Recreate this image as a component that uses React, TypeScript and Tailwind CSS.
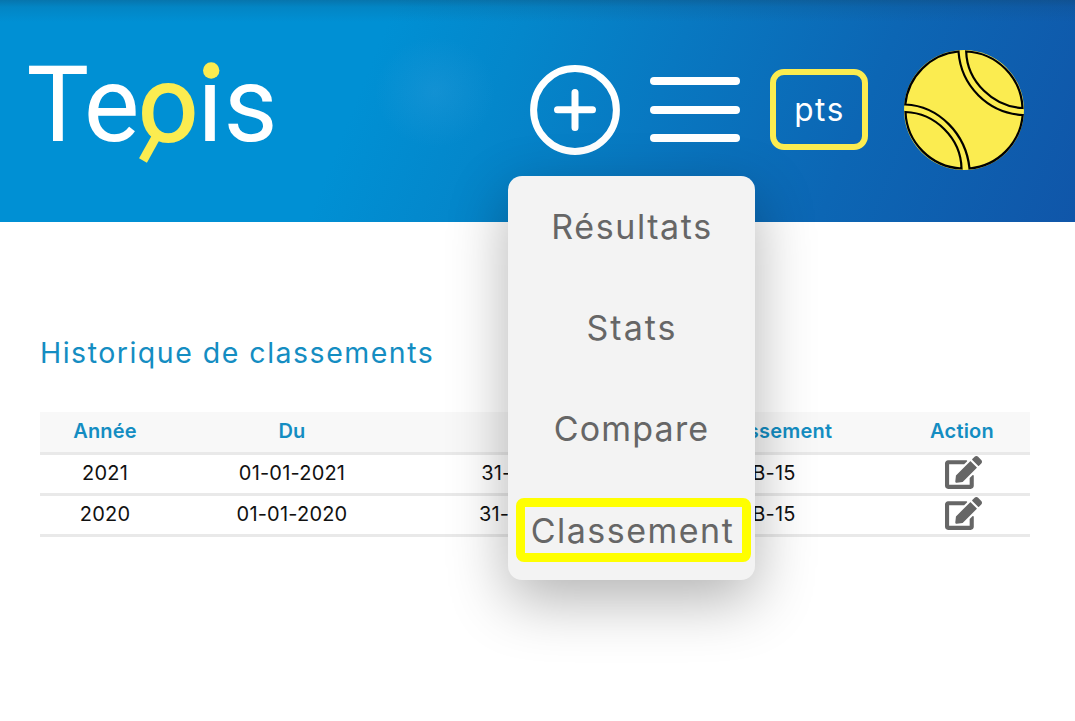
import { FaEdit } from "react-icons/fa";

const rows = [
  { year: "2021", from: "01-01-2021", to: "31-12-2021", rank: "B-15" },
  { year: "2020", from: "01-01-2020", to: "31-12-2020", rank: "B-15" },
];

function Logo() {
  return (
    <svg width="250" height="140" viewBox="28 38 250 140" className="block overflow-visible" fontFamily="Roboto, sans-serif" fontSize="105" fill="#fff">
      <text x="26.5" y="140.8">T</text>
      <text x="83.7" y="140.8">e</text>
      <text x="138.3" y="141.3" fill="#fbec50" stroke="#fbec50" strokeWidth="1.8">o</text>
      <path d="M154.5 137 L143 160.5" transform="rotate(3 143 160)" stroke="#fbec50" strokeWidth="9" />
      <text x="197.2" y="140.8">i</text>
      <circle cx="211.2" cy="70.5" r="8.2" fill="#fbec50" />
      <text x="223.5" y="140.8">s</text>
    </svg>
  );
}

function Ball() {
  return (
    <svg width="120" height="120" viewBox="0 0 120 120" className="block">
      <circle cx="60" cy="60" r="60" fill="#fbec50" />
      <g fill="none" stroke="#000" strokeWidth="2.2">
        <path d="M1.3 54.5 A59 59 0 0 1 54.5 1.5 C57 36 84 63 118.7 65 A59 59 0 0 1 65.5 118.5 C62 84 35 56 1.3 54.5Z" />
        <path d="M62.2 1.5 A59 59 0 0 1 118.5 58 C90 57 63 32 62.2 1.5Z" />
        <path d="M1.5 62 C31 63 57 88 57.5 118.5 A59 59 0 0 1 1.5 62Z" />
      </g>
    </svg>
  );
}

function Header() {
  return (
    <header className="flex h-[222px] items-start bg-[linear-gradient(180deg,rgba(20,60,90,0.32)_0px,rgba(20,60,90,0.13)_7px,rgba(20,60,90,0)_22px),radial-gradient(ellipse_60px_55px_at_435px_92px,rgba(60,160,220,0.28),rgba(60,160,220,0)),linear-gradient(112deg,#0090d4_0%,#0090d4_34%,#0487cb_46%,#0878c1_60%,#0c66b4_78%,#1056a9_100%)] pl-7">
      <div className="mt-[38px] w-[502px]"><Logo /></div>
      <svg width="90" height="90" viewBox="0 0 90 90" className="mt-[65px] block shrink-0" fill="none" stroke="#fff" strokeWidth="7" strokeLinecap="round">
        <circle cx="45" cy="45" r="41.4" />
        <path d="M27.5 44.8H62.5M45 27.5V62.5" />
      </svg>
      <div className="mt-[77px] ml-[30px] flex w-[90px] shrink-0 flex-col gap-[20.7px]">
        <span className="h-2 rounded-full bg-white" />
        <span className="h-2 rounded-full bg-white" />
        <span className="h-2 rounded-full bg-white" />
      </div>
      <div className="mt-[69px] ml-[30px] flex h-[81px] w-[98px] shrink-0 items-center justify-center rounded-[14px] border-6 border-[#fbec50] pl-[1px] text-[31.5px] tracking-[1.6px] text-white">
        pts
      </div>
      <div className="mt-[50px] ml-9 shrink-0"><Ball /></div>
    </header>
  );
}

function Menu() {
  const item = "flex h-[101px] items-center justify-center";
  return (
    <nav className="absolute top-[176px] left-[508px] h-[404px] w-[247px] rounded-[14px] bg-[#f3f3f3] text-[34px] text-[#666] shadow-[0_20px_60px_rgba(0,0,0,0.3)]">
      <div className={item}><span className="pl-[1px] tracking-[1.6px]">Résultats</span></div>
      <div className={item}><span className="pl-[1px] tracking-[2px]">Stats</span></div>
      <div className={item}><span className="tracking-[1.2px]">Compare</span></div>
      <div className="mt-[19px] ml-2 flex h-16 w-[235px] items-center justify-center rounded-[8px] border-[9px] border-[#ffff00] pr-[2px]">
        <span className="tracking-[1.5px]">Classement</span>
      </div>
    </nav>
  );
}

export default function App() {
  const cols = "grid grid-cols-[130px_244px_240px_240px_136px] items-center border-b-3 border-[#e9e9e9] text-center";
  return (
    <div className="relative h-[721px] w-[1075px] overflow-hidden bg-white font-['Inter',sans-serif]">
      <Header />
      <main className="px-10 pt-[111px]">
        <h1 className="h-10 text-[28.5px] leading-10 tracking-[1.5px] text-[#148dc2]">Historique de classements</h1>
        <div className="mt-[39px] w-[990px] text-[20px] leading-[28px] text-[#111]">
          <div className={cols + " h-[43px] bg-[#f8f8f8] pb-[2px] font-semibold tracking-[0.2px] text-[#148dc2]"}>
            <span>Année</span>
            <span>Du</span>
            <span>Au</span>
            <span>Classement</span>
            <span>Action</span>
          </div>
          {rows.map((r) => (
            <div key={r.year} className={cols + " h-[41px] pb-[2px] tracking-[0.2px]"}>
              <span>{r.year}</span>
              <span>{r.from}</span>
              <span>{r.to}</span>
              <span>{r.rank}</span>
              <span className="flex justify-center pb-[2px] pl-[3px]">
                <FaEdit className="h-[33px] w-[37px] text-[#666]" />
              </span>
            </div>
          ))}
        </div>
      </main>
      <Menu />
    </div>
  );
}
